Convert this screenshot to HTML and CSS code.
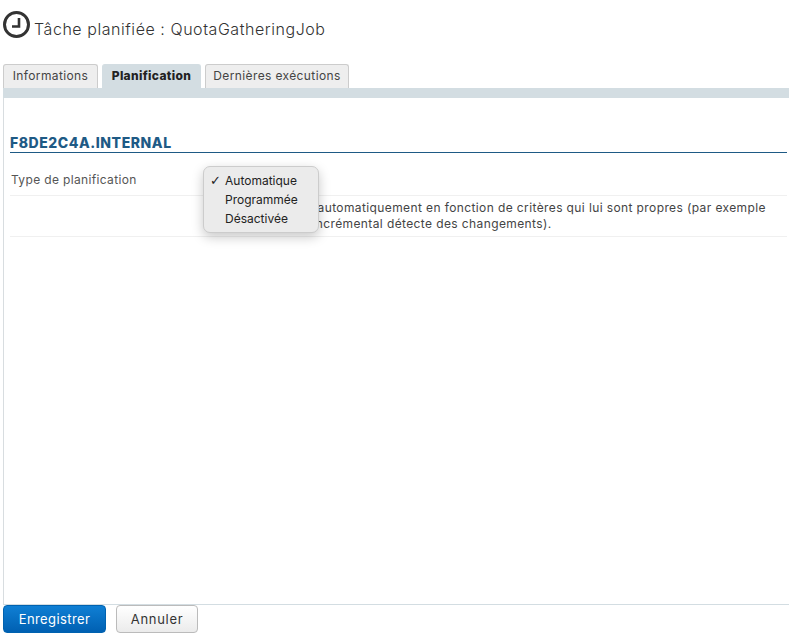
FILE: index.html
```html
<!DOCTYPE html>
<html lang="fr">
<head>
<meta charset="utf-8">
<title>Tâche planifiée : QuotaGatheringJob</title>
<link rel="stylesheet" href="styles.css">
</head>
<body>
<div class="page">
  <header class="title">
    <svg class="clock" width="28" height="28" viewBox="0 0 28 28" aria-hidden="true">
      <circle cx="14.5" cy="14.5" r="12" fill="none" stroke="#333" stroke-width="3"/>
      <path d="M17 8V16.5H10" fill="none" stroke="#333" stroke-width="2.6"/>
    </svg>
    <h1>Tâche planifiée : QuotaGatheringJob</h1>
  </header>
  <nav class="tabs">
    <a class="tab tab-info">Informations</a>
    <a class="tab tab-plan active">Planification</a>
    <a class="tab tab-last">Dernières exécutions</a>
  </nav>
  <div class="band"></div>
  <main class="panel">
    <h2 class="server">F8DE2C4A.INTERNAL</h2>
    <div class="row row-type">
      <span class="label">Type de planification</span>
    </div>
    <div class="row row-desc">
      <span class="label"></span>
      <p class="desc">La tâche démarre automatiquement en fonction de critères qui lui sont propres (par exemple quand l'indexeur incrémental détecte des changements).</p>
    </div>
    <ul class="menu">
      <li class="checked">Automatique</li>
      <li>Programmée</li>
      <li>Désactivée</li>
    </ul>
  </main>
  <footer class="actions">
    <button class="btn primary">Enregistrer</button>
    <button class="btn">Annuler</button>
  </footer>
</div>
</body>
</html>
```
FILE: styles.css
```css
* { box-sizing: border-box; }
html, body { margin: 0; padding: 0; background: #fff; }
body { font-family: Inter, "Liberation Sans", sans-serif; color: #444; font-size: 12px; }
.page { width: 789px; height: 640px; display: flex; flex-direction: column; padding-left: 3px; }
.title { height: 64px; display: flex; align-items: flex-start; padding-top: 10px; margin-left: -1px; }
.clock { flex: none; }
.title h1 { margin: 9px 0 0 4px; font-size: 16px; line-height: 20px; font-weight: 300; color: #333; letter-spacing: 0.55px; white-space: nowrap; }
.tabs { display: flex; gap: 4px; height: 24px; }
.tab { display: flex; align-items: center; justify-content: center; height: 24px; padding-bottom: 2px; background: #eee; border: 1px solid #ccc; border-bottom: 0; border-radius: 3px 3px 0 0; color: #444; font-size: 12px; letter-spacing: 0.38px; }
.tab-info { width: 95px; }
.tab-plan { width: 99px; }
.tab-last { width: 144px; }
.tab.active { background: #d3dde2; font-weight: 800; color: #222; letter-spacing: 0.34px; border-color: #d3dde2; }
.band { height: 10px; background: #d3dde2; }
.panel { position: relative; flex: 1; border-left: 1px solid #d8dde0; border-bottom: 1px solid #d3dde2; padding: 37px 2px 0 6px; }
.server { margin: 0; height: 18px; font-size: 14px; line-height: 16px; font-weight: 800; color: #1e5a85; letter-spacing: 0.55px; border-bottom: 1px solid #1e5a85; }
.row { display: flex; border-bottom: 1px solid #f0f0f0; }
.row-type { height: 43px; padding-top: 19px; }
.row-desc { height: 41px; }
.label { flex: none; width: 200px; line-height: 16px; color: #555; letter-spacing: 0.35px; padding-left: 1px; }
.desc { margin: 4px 0 0 -2px; line-height: 16px; color: #444; letter-spacing: 0.39px; width: 564px; }
.menu { position: absolute; left: 199px; top: 68px; width: 116px; height: 67px; margin: 0; padding: 4px 0 0 21px; list-style: none; background: #ebebeb; border: 1px solid #ccc; border-radius: 7px; box-shadow: 0 4px 12px rgba(0,0,0,.22); font-size: 12px; color: #222; }
.menu li { height: 19px; line-height: 19px; position: relative; }
.menu .checked::before { content: "✓"; position: absolute; left: -15px; font-family: "DejaVu Sans", sans-serif; font-size: 13px; }
.actions { height: 35px; display: flex; gap: 10px; }
.btn { width: 82px; height: 28px; padding: 0; border: 1px solid #bbb; border-radius: 4px; background: linear-gradient(#fff, #ebebeb); font: 13px Inter, sans-serif; letter-spacing: 0.7px; color: #333; }
.btn.primary { width: 103px; letter-spacing: 0.4px; border: 1px solid #0062b0; background: linear-gradient(#0f7fd4, #0060b2); color: #fff; }
```
